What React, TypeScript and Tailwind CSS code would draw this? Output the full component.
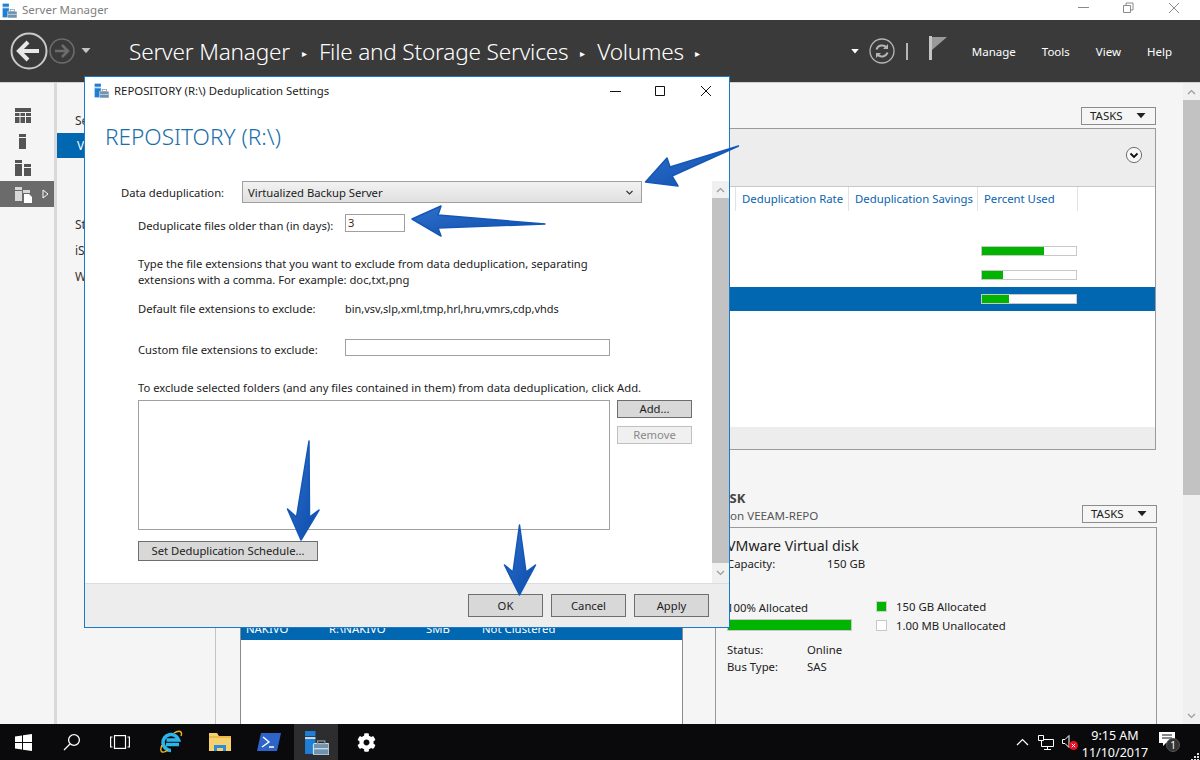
import React from "react";
import { FaCog } from "react-icons/fa";

// --- SMALL DRAWN ICONS ---
function ServerIcon({ size = 14 }: { size?: number }) {
  return (
    <svg width={size} height={size} viewBox="0 0 24 24">
      <rect x="1" y="1" width="10" height="5" fill="#1f7fd4" />
      <rect x="1" y="7" width="10" height="16" fill="#1f7fd4" />
      <rect x="1" y="7" width="10" height="1.4" fill="#ffffff" />
      <rect x="9" y="13" width="15" height="11" rx="1" fill="#6f93ad" stroke="#ffffff" strokeWidth="0.8" />
      <rect x="13" y="10.5" width="7" height="3" fill="none" stroke="#8a9aa6" strokeWidth="1.2" />
      <rect x="9.5" y="17.5" width="14" height="1" fill="#e8eef2" />
    </svg>
  );
}

function Tri({ className }: { className: string }) {
  return (
    <svg width="12" height="8" viewBox="0 0 12 8" className={className}>
      <path d="M0 0h12L6 7z" fill="currentColor" />
    </svg>
  );
}

function Chevron({ up = false }: { up?: boolean }) {
  return (
    <svg width="9" height="6" viewBox="0 0 9 6">
      <path d={up ? "M1 5l3.5-3.5L8 5" : "M1 1l3.5 3.5L8 1"} fill="none" stroke="#9a9a9a" strokeWidth="1.2" />
    </svg>
  );
}

function TasksButton() {
  return (
    <div className="flex h-[18px] w-[75px] items-center justify-between border border-[#8c8c8c] pl-2 pr-[9px] text-[11.5px] text-[#222]">
      <span>TASKS</span>
      <Tri className="h-[6px] w-[10px] text-[#222]" />
    </div>
  );
}

function WinButton({ label, className, w = "w-[75px]", h = "h-[18px]" }: { label: string; className?: string; w?: string; h?: string }) {
  return (
    <div className={`flex shrink-0 items-center justify-center border border-[#6e6e6e] bg-[#d8d8d8] text-[#1c1c1c] ${w} ${h} ${className ?? ""}`}>
      {label}
    </div>
  );
}

function UsageBar({ used }: { used: number }) {
  return (
    <div className="h-[10px] w-[96px] border border-[#c8c8c8] bg-white">
      <div className="h-full bg-[#00b400]" style={{ width: used }} />
    </div>
  );
}

function ScrollBar({ downH, thumbEnd }: { downH: string; thumbEnd?: boolean }) {
  return (
    <div className="flex h-full w-[17px] shrink-0 flex-col bg-[#f0f0f0]">
      <div className="flex h-[17px] shrink-0 items-center justify-center"><Chevron up /></div>
      <div className={`bg-[#c2c2c2] ${thumbEnd ? "h-[395px]" : "flex-1"}`} />
      {thumbEnd && <div className="flex-1" />}
      <div className={`flex shrink-0 items-center justify-center ${downH}`}><Chevron /></div>
    </div>
  );
}

// --- WINDOW CHROME ---
function TitleBar() {
  return (
    <div className="flex h-5 shrink-0 items-center bg-white pl-[2px] text-[12px] text-[#808080]">
      <ServerIcon size={15} />
      <span className="ml-[5px] text-[11.5px]">Server Manager</span>
      <div className="ml-auto flex items-center pr-[20px]">
        <svg width="102" height="12" viewBox="0 0 102 12" fill="none" stroke="#8a8a8a" className="mb-[4px]">
          <path d="M0 5.5h11" />
          <path d="M45.5 3.5h7v7h-7zM48 3.5v-2.5h7v7h-2.5" />
          <path d="M91 1l10 10M101 1L91 11" />
        </svg>
      </div>
    </div>
  );
}

function TopBar() {
  return (
    <div className="flex h-[62px] shrink-0 items-center bg-[#3a3a3a] pl-[10px] text-white">
      <svg width="38" height="38" viewBox="0 0 38 38" fill="none">
        <circle cx="19" cy="19" r="17.5" stroke="#c9c9c9" strokeWidth="2" />
        <path d="M29 19H9M18 10l-9 9 9 9" stroke="#e8e8e8" strokeWidth="4" />
      </svg>
      <svg width="26" height="26" viewBox="0 0 26 26" fill="none" className="ml-[1px]">
        <circle cx="13" cy="13" r="12" stroke="#6c6c6c" strokeWidth="1.6" />
        <path d="M6 13h13M13 7l6 6-6 6" stroke="#6c6c6c" strokeWidth="2.6" />
      </svg>
      <Tri className="ml-[6px] h-[6px] w-[10px] text-[#c4c4c4]" />
      <div className="ml-[38px] flex items-center pt-[3px] text-[22.6px] font-light leading-none tracking-[-0.2px]">
        <span>Server Manager</span>
        <span className="mx-[12px] text-[10px]">▸</span>
        <span>File and Storage Services</span>
        <span className="mx-[12px] text-[10px]">▸</span>
        <span>Volumes</span>
        <span className="ml-[11px] text-[10px]">▸</span>
      </div>
      <div className="ml-auto flex items-center">
        <Tri className="h-[5px] w-[8px] text-white" />
        <svg width="26" height="26" viewBox="0 0 26 26" fill="none" className="ml-[10px]">
          <circle cx="13" cy="13" r="12" stroke="#b5b5b5" strokeWidth="1.3" />
          <path d="M7.5 11.5A5.8 5.8 0 0 1 17.5 9.5M18.5 14.5A5.8 5.8 0 0 1 8.5 16.5" stroke="#b5b5b5" strokeWidth="2" />
          <path d="M19 6v5h-5zM7 20v-5h5z" fill="#b5b5b5" />
        </svg>
        <div className="ml-[11px] h-[17px] w-[2px] bg-[#b5b5b5]" />
        <svg width="18" height="24" viewBox="0 0 18 24" className="ml-[21px] mb-[6px]">
          <rect x="0" y="0" width="3" height="24" fill="#c4c4c4" />
          <path d="M3 1h15l-15 13z" fill="#9a9a9a" />
        </svg>
        <div className="ml-[25px] flex gap-[26px] pr-[28px] pt-[1px] text-[11.5px]">
          <span>Manage</span>
          <span>Tools</span>
          <span>View</span>
          <span>Help</span>
        </div>
      </div>
    </div>
  );
}

function SideBar() {
  return (
    <div className="flex w-[54px] shrink-0 flex-col bg-[#f5f5f5] pt-[25px]">
      <svg width="16" height="16" viewBox="0 0 16 16" className="ml-[15px]">
        <path d="M0 0h16v4H0zM0 5h4.5v3H0zM5.5 5H10v3H5.5zM11 5h5v3h-5zM0 9h4.5v6H0zM5.5 9H10v6H5.5zM11 9h5v6h-5z" fill="#555" />
      </svg>
      <svg width="16" height="16" viewBox="0 0 16 16" className="ml-[15px] mt-[10px]">
        <path d="M4 0h7v3H4zM4 4h7v11H4z" fill="#555" />
      </svg>
      <svg width="16" height="16" viewBox="0 0 16 16" className="ml-[15px] mt-[10px]">
        <path d="M0 0h7v3H0zM0 4h7v12H0zM9 4h7v3H9zM9 8h7v8H9z" fill="#555" />
      </svg>
      <div className="mt-[5px] flex h-[26px] items-center bg-[#6b6b6b] pl-[15px]">
        <svg width="18" height="17" viewBox="0 0 18 17">
          <path d="M0 1h7v3H0zM0 5h7v10H0zM8 4h7v3H8z" fill="#d8d8d8" />
          <path d="M9 8h5l3 3v6H9z" fill="#ffffff" />
        </svg>
        <svg width="7" height="10" viewBox="0 0 7 10" className="ml-[9px]">
          <path d="M1 1l5 4-5 4z" fill="none" stroke="#ffffff" />
        </svg>
      </div>
    </div>
  );
}

function NavList() {
  return (
    <div className="flex w-[161px] shrink-0 flex-col border-l-3 border-l-[#d9d9d9] bg-[#f5f5f5] pt-[25px] text-[12px] text-[#333]">
      <div className="flex h-[25px] items-center pl-[18px]">Servers</div>
      <div className="flex h-[25px] items-center bg-[#0067b0] pl-[20px] text-white">Volumes</div>
      <div className="flex h-[54px] items-start pl-[30px] pt-[4px]">Disks</div>
      <div className="flex h-[26px] items-center pl-[18px]">Storage Pools</div>
      <div className="flex h-[26px] items-center pl-[18px]">iSCSI</div>
      <div className="flex h-[26px] items-center pl-[18px]">Work Folders</div>
    </div>
  );
}

// --- BACKGROUND PAGE ---
function VolumesPanel() {
  return (
    <div>
      <div className="flex justify-end"><TasksButton /></div>
      <div className="mt-[3px] flex h-[322px] flex-col border border-[#9a9a9a] bg-white">
        <div className="flex h-[57px] shrink-0 items-center justify-end bg-[#ededed] pb-[5px] pr-[12px]">
          <svg width="18" height="18" viewBox="0 0 18 18" fill="none">
            <circle cx="9" cy="9" r="7.6" fill="#f8f8f8" stroke="#707070" />
            <path d="M5.5 7.5L9 11l3.5-3.5" stroke="#111" strokeWidth="1.8" />
          </svg>
        </div>
        <div className="flex h-[25px] shrink-0 justify-end whitespace-nowrap border-t border-[#c8c8c8] pr-[77px] text-[11.35px] text-[#0a64b0]">
          <div className="flex w-[113px] items-center border-l border-[#e2e2e2] pl-[6px]">Deduplication Rate</div>
          <div className="flex w-[129px] items-center border-l border-[#e2e2e2] pl-[6px]">Deduplication Savings</div>
          <div className="flex w-[101px] items-center border-x border-[#e2e2e2] pl-[6px]">Percent Used</div>
        </div>
        <div className="flex flex-1 flex-col pt-[28px]">
          <div className="flex h-[24px] items-center justify-end pr-[78px]"><UsageBar used={62} /></div>
          <div className="flex h-[24px] items-center justify-end pr-[78px]"><UsageBar used={21} /></div>
          <div className="flex h-[24px] items-center justify-end bg-[#0067b0] pr-[78px]"><UsageBar used={27} /></div>
        </div>
        <div className="h-[22px] shrink-0 bg-[#ededed]" />
      </div>
    </div>
  );
}

function SharesTable() {
  return (
    <div className="flex h-[197px] w-[443px] shrink-0 flex-col self-end border-x border-[#8c8c8c] bg-white pt-[90px] text-[11.35px]">
      <div className="flex h-[23px] items-center bg-[#0067b0] pl-[5px] text-white">
        <span className="w-[83px]">NAKIVO</span>
        <span className="w-[97px]">R:\NAKIVO</span>
        <span className="w-[56px]">SMB</span>
        <span>Not Clustered</span>
      </div>
    </div>
  );
}

function DiskPanel() {
  return (
    <div className="-mr-[1px] flex flex-1 flex-col text-[11.35px] text-[#222]">
      <div className="flex items-end justify-between">
        <div className="-mb-[1px]">
          <div className="text-[13px] font-bold leading-[17px] text-[#444]">DISK</div>
          <div className="pl-[15px] text-[11.6px] leading-[17px] text-[#555]">on VEEAM-REPO</div>
        </div>
        <TasksButton />
      </div>
      <div className="mt-[4px] h-[197px] border border-b-0 border-[#9a9a9a] pl-[11px] pt-[8px]">
        <div className="text-[14.2px] leading-[19px]">VMware Virtual disk</div>
        <div className="flex leading-[18px]">
          <span className="w-[100px]">Capacity:</span>
          <span>150 GB</span>
        </div>
        <div className="mt-[24px] flex">
          <div className="w-[149px] pt-[3px]">
            <div className="leading-[16px]">100% Allocated</div>
            <div className="mt-[3px] h-[12px] w-[125px] border border-[#c8c8c8] bg-[#00b400]" />
          </div>
          <div>
            <div className="flex h-[19px] items-center">
              <span className="h-[11px] w-[11px] border border-[#d0d0d0] bg-[#00b400]" />
              <span className="ml-[9px]">150 GB Allocated</span>
            </div>
            <div className="flex h-[19px] items-center">
              <span className="h-[11px] w-[11px] border border-[#c8c8c8] bg-white" />
              <span className="ml-[9px]">1.00 MB Unallocated</span>
            </div>
          </div>
        </div>
        <div className="mt-[6px] flex leading-[17px]">
          <span className="w-[80px]">Status:</span>
          <span>Online</span>
        </div>
        <div className="flex leading-[17px]">
          <span className="w-[80px]">Bus Type:</span>
          <span>SAS</span>
        </div>
      </div>
    </div>
  );
}

// --- DIALOG ---
function DedupDialog() {
  return (
    <div className="absolute left-[84px] top-[76px] flex h-[552px] w-[646px] flex-col border border-[#1979ca] bg-white text-[11.25px] leading-[16px] text-[#1c1c1c]">
      <div className="flex h-[27px] shrink-0 items-center pl-[9px] pr-[17px]">
        <ServerIcon size={15} />
        <span className="ml-[5px] text-[11.36px]">REPOSITORY (R:\) Deduplication Settings</span>
        <svg width="102" height="12" viewBox="0 0 102 12" fill="none" stroke="#111" className="ml-auto">
          <path d="M0 6.5h11" />
          <path d="M45.5 1.5h9v9h-9z" />
          <path d="M91 1l10 10M101 1L91 11" />
        </svg>
      </div>
      <div className="ml-[20px] mt-[17px] h-[32px] shrink-0 text-[22.6px] font-light leading-[32px] text-[#1a6fa8]">REPOSITORY (R:\)</div>
      <div className="mt-[28px] flex min-h-0 flex-1">
        <div className="min-w-0 flex-1">
          <div className="flex items-center pl-[36px]">
            <span className="w-[121px] pt-[2px]">Data deduplication:</span>
            <div className="flex h-[22px] w-[400px] items-center justify-between border border-[#a0a0a0] bg-gradient-to-b from-[#f2f2f2] to-[#e0e0e0] pl-[5px] pr-[7px] pt-[2px]">
              <span>Virtualized Backup Server</span>
              <svg width="9" height="6" viewBox="0 0 9 6"><path d="M1.5 1l3 3 3-3" fill="none" stroke="#333" strokeWidth="1.2" /></svg>
            </div>
          </div>
          <div className="mt-[11px] flex items-start pl-[53px]">
            <span className="w-[207px] pt-[4px]">Deduplicate files older than (in days):</span>
            <div className="flex h-[18px] w-[60px] items-center border border-[#a0a0a0] pl-[2px] text-[#5a1c1c]">3</div>
          </div>
          <p className="mt-[22px] pl-[53px]">
            Type the file extensions that you want to exclude from data deduplication, separating
            <br />
            extensions with a comma. For example: doc,txt,png
          </p>
          <div className="mt-[13px] flex pl-[53px]">
            <span className="w-[207px]">Default file extensions to exclude:</span>
            <span className="text-[10.95px]">bin,vsv,slp,xml,tmp,hrl,hru,vmrs,cdp,vhds</span>
          </div>
          <div className="mt-[22px] flex items-start pl-[53px]">
            <span className="w-[207px] pt-[3px]">Custom file extensions to exclude:</span>
            <div className="h-[17px] w-[265px] border border-[#a0a0a0]" />
          </div>
          <p className="mt-[22px] pl-[53px]">To exclude selected folders (and any files contained in them) from data deduplication, click Add.</p>
          <div className="mt-[4px] flex pl-[53px]">
            <div className="h-[130px] w-[472px] border border-[#a0a0a0]" />
            <div className="ml-[7px] flex flex-col gap-[8px]">
              <WinButton label="Add..." />
              <div className="flex h-[18px] w-[75px] items-center justify-center border border-[#c0c0c0] bg-[#f0f0f0] text-[#888]">Remove</div>
            </div>
          </div>
          <WinButton label="Set Deduplication Schedule..." w="w-[180px]" h="h-[20px]" className="ml-[53px] mt-[11px]" />
        </div>
        <ScrollBar downH="h-[20px]" />
      </div>
      <div className="flex h-[44px] shrink-0 items-start justify-end gap-[8px] border-t border-[#dcdcdc] bg-[#ededed] pr-[20px] pt-[10px]">
        <WinButton label="OK" h="h-[23px]" />
        <WinButton label="Cancel" h="h-[23px]" />
        <WinButton label="Apply" h="h-[23px]" />
      </div>
    </div>
  );
}

// hand-drawn callout arrows from the screenshot
function Arrows() {
  const arrows = [
    "M645.5 182 L667 158 L670 167 L738.5 146 L672 176 L678 186 Z",
    "M412 219 L441 206 L438 215 L545 224 L438 228 L441 236 Z",
    "M301 540 L287.5 509 L296.5 517 L309 441 L309.5 517 L319 510 Z",
    "M519.5 595 L504.5 565 L513 572 L519.5 525 L526 572 L535.5 565 Z",
  ];
  return (
    <svg width="1200" height="760" viewBox="0 0 1200 760" className="pointer-events-none absolute left-0 top-0">
      <defs>
        <linearGradient id="arrowFill" x1="0" y1="0" x2="1" y2="1">
          <stop offset="0" stopColor="#2f70cc" />
          <stop offset="1" stopColor="#0b4cab" />
        </linearGradient>
      </defs>
      {arrows.map((d) => (
        <path key={d} d={d} fill="url(#arrowFill)" stroke="#1457b6" strokeWidth="1.5" strokeLinejoin="round" />
      ))}
    </svg>
  );
}

// --- TASKBAR ---
function TaskBar() {
  return (
    <div className="relative flex h-9 shrink-0 items-center bg-[#0a0a0c] text-white">
      <svg width="17" height="17" viewBox="0 0 17 17" className="ml-[15px]">
        <path d="M0 2.4L7 1.4V8H0zM8 1.2L17 0v8H8zM0 9h7v6.6l-7-1zM8 9h9v8l-9-1.2z" fill="#ffffff" />
      </svg>
      <svg width="18" height="18" viewBox="0 0 18 18" fill="none" stroke="#ffffff" strokeWidth="1.3" className="ml-[31px]">
        <circle cx="11" cy="7" r="5.4" />
        <path d="M7 11l-6 6" />
      </svg>
      <svg width="20" height="14" viewBox="0 0 20 14" fill="none" stroke="#ffffff" strokeWidth="1.2" className="ml-[29px]">
        <rect x="4.5" y="0.6" width="11" height="12.8" />
        <path d="M2.5 2H0.6v10h1.9M17.5 2h1.9v10h-1.9" />
      </svg>
      <svg width="24" height="24" viewBox="0 0 24 24" fill="none" className="ml-[29px]">
        <path d="M12 20.5a8 8 0 1 1 7.6-10.5H7.5M7 14.5h13" stroke="#2cb5ea" strokeWidth="3.6" />
        <path d="M3 15C0 22 3 24 9 20M15 3c5-3 9-2 7 3" stroke="#f1b51c" strokeWidth="1.4" />
      </svg>
      <svg width="22" height="20" viewBox="0 0 22 20" className="ml-[26px]">
        <path d="M0 1h8l2 3h12v15H0z" fill="#f4d06f" />
        <path d="M0 4h22v2H0z" fill="#e9b949" />
        <path d="M5 19v-6h12v6h-3v-3H8v3z" fill="#2a8fd6" />
      </svg>
      <svg width="24" height="18" viewBox="0 0 24 18" className="ml-[26px]">
        <path d="M4 0h20l-4 18H0z" fill="#2e64c8" />
        <path d="M6 4l6 5-7 5M12 14h5" fill="none" stroke="#ffffff" strokeWidth="1.4" />
      </svg>
      <div className="ml-[13px] flex h-9 w-[44px] items-center justify-center bg-[#2d2d30]">
        <ServerIcon size={25} />
      </div>
      <FaCog className="ml-[19px] h-[19px] w-[19px]" />
      <div className="ml-auto flex items-center pr-[25px]">
        <svg width="13" height="8" viewBox="0 0 13 8" fill="none" stroke="#ffffff" strokeWidth="1.2">
          <path d="M1 7l5.5-5.5L12 7" />
        </svg>
        <svg width="16" height="15" viewBox="0 0 16 15" fill="none" stroke="#ffffff" className="ml-[9px]">
          <path d="M3.5 4.5h12v7h-12zM9.5 11.5v3M6 14.5h7" />
          <path d="M0.5 0.5h5v5h-5z" fill="#0a0a0c" />
        </svg>
        <svg width="16" height="16" viewBox="0 0 16 16" className="ml-[8px]">
          <path d="M0.5 5.5h2.5l4-4v12l-4-4H0.5z" fill="none" stroke="#ffffff" />
          <circle cx="11.5" cy="11.5" r="4.5" fill="#e81123" />
          <path d="M9.8 9.8l3.4 3.4M13.2 9.8l-3.4 3.4" stroke="#ffffff" />
        </svg>
        <div className="ml-[1px] w-[72px] pt-[4px] text-center text-[12.5px] leading-[17px]">
          <div>9:15 AM</div>
          <div>11/10/2017</div>
        </div>
        <div className="relative ml-[8px] h-[20px] w-[16px]">
          <svg width="16" height="15" viewBox="0 0 16 15">
            <path d="M0 0h16v11H7l-3 3v-3H0z" fill="#ffffff" />
            <path d="M3 3h10M3 6h10" stroke="#111" />
          </svg>
          <div className="absolute left-[7px] top-[6px] flex h-[14px] w-[14px] items-center justify-center rounded-full border border-[#555] bg-[#333] text-[10px] leading-none">1</div>
        </div>
      </div>
      <svg width="10" height="8" viewBox="0 0 10 8" className="absolute bottom-0 right-0">
        <path d="M7 1h2v2H7zM4 4h2v2H4zM7 4h2v2H7zM1 7h2v1H1zM4 7h2v1H4zM7 7h2v1H7z" fill="#e0e0e0" />
      </svg>
    </div>
  );
}

export default function App() {
  return (
    <div className="relative flex h-[760px] w-[1200px] flex-col overflow-hidden bg-[#f5f5f5] font-['Noto_Sans',sans-serif]">
      <TitleBar />
      <TopBar />
      <div className="flex min-h-0 flex-1 border-t border-[#d0d0d0]">
        <SideBar />
        <NavList />
        <div className="flex min-w-0 flex-1 flex-col border-l border-[#c4c4c4] pl-[24px] pr-[27px] pt-[24px]">
          <VolumesPanel />
          <div className="mt-auto flex gap-[32px]">
            <SharesTable />
            <DiskPanel />
          </div>
        </div>
        <ScrollBar downH="h-[17px]" thumbEnd />
      </div>
      <TaskBar />
      <DedupDialog />
      <Arrows />
    </div>
  );
}
